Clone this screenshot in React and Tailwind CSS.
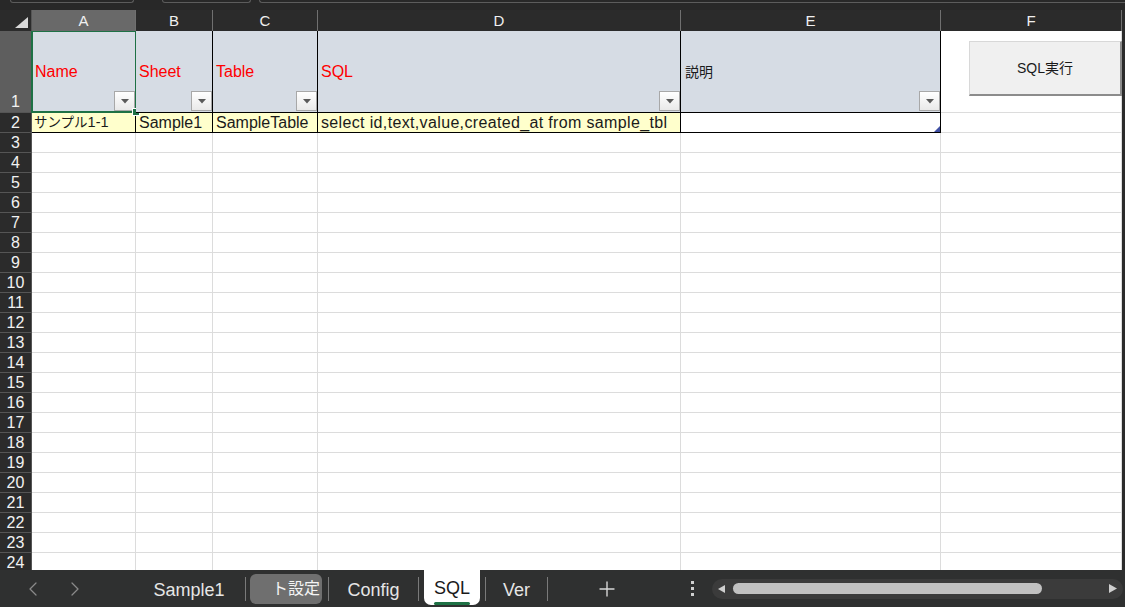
import React from 'react';
import { ChevronLeft, ChevronRight, Plus } from 'lucide-react';

const W = ['w-[104px]', 'w-[77px]', 'w-[105px]', 'w-[363px]', 'w-[260px]', 'w-[181px]'];
const LETTERS = ['A', 'B', 'C', 'D', 'E', 'F'];

function FilterBtn() {
  return (
    <div className="absolute right-0 bottom-[1px] w-[21px] h-[20px] border border-[#a8a8a8] bg-gradient-to-b from-white to-[#e9e9e9] flex items-center justify-center">
      <svg width="8" height="5" viewBox="0 0 8 5"><path d="M0 0 L8 0 L4 4.5 Z" fill="#5a5a5a" /></svg>
    </div>
  );
}

function RowHead({ n, sel }) {
  return (
    <div
      className={
        'w-[32px] shrink-0 border-r border-b border-[#555555] flex justify-center leading-none text-[16px] text-[#f2f2f2] ' +
        (sel ? 'bg-[#5e5e5e] items-end pb-[2px]' : 'bg-[#2b2b2b] items-center')
      }
    >
      {n}
    </div>
  );
}

function EmptyRow({ n }) {
  return (
    <div className="flex h-[20px] shrink-0">
      <RowHead n={n} />
      {W.map((w, i) => (
        <div key={i} className={w + ' shrink-0 bg-white border-r border-b border-[#dcdcdc]'} />
      ))}
    </div>
  );
}

export default function App() {
  const rows = [];
  for (let i = 3; i <= 24; i++) rows.push(i);
  return (
    <div className="w-[1125px] h-[607px] overflow-hidden flex flex-col bg-[#2b2b2b] font-['Liberation_Sans','Noto_Sans_CJK_JP',sans-serif]">
      {/* top strip */}
      <div className="h-[10px] shrink-0 flex bg-[#282828]">
        <div className="ml-[10px] w-[124px] h-[3px] border-b border-x border-[#5c5c5c] rounded-b-[5px]" />
        <div className="ml-[28px] w-[89px] h-[3px] border-b border-x border-[#5c5c5c] rounded-b-[5px]" />
        <div className="ml-[8px] flex-1 h-[3px] border-b border-l border-[#5c5c5c] rounded-bl-[5px]" />
      </div>

      {/* column headers */}
      <div className="h-[21px] shrink-0 flex text-[15px] leading-none text-[#f0f0f0]">
        <div className="w-[32px] shrink-0 border-r border-[#555555] relative">
          <svg className="absolute left-[15px] top-[7px]" width="13" height="11" viewBox="0 0 13 11">
            <path d="M13 0 L13 11 L0 11 Z" fill="#d9d9d9" />
          </svg>
        </div>
        {W.map((w, i) => (
          <div
            key={i}
            className={
              w +
              ' shrink-0 border-r border-[#707070] flex items-center justify-center ' +
              (i === 0 ? 'bg-[#696969]' : 'bg-[#2b2b2b]')
            }
          >
            {LETTERS[i]}
          </div>
        ))}
      </div>

      {/* grid */}
      <div className="flex-1 overflow-hidden relative">
        {/* row 1 */}
        <div className="flex h-[82px] shrink-0 text-[16px] leading-none">
          <RowHead n={1} sel />
          <div className={W[0] + ' shrink-0 relative bg-[#d6dce4] border-r border-b border-black flex items-center pl-[3px] text-[#ff0000]'}>
            Name
            <FilterBtn />
            <div className="absolute left-[-1px] top-[-1px] w-[106px] h-[83px] border-2 border-[#1e7145]">
              <div className="absolute right-[-4px] bottom-[-4px] w-[6px] h-[6px] bg-[#1e7145] outline outline-1 outline-white" />
            </div>
          </div>
          <div className={W[1] + ' shrink-0 relative bg-[#d6dce4] border-r border-b border-black flex items-center pl-[3px] text-[#ff0000]'}>
            Sheet
            <FilterBtn />
          </div>
          <div className={W[2] + ' shrink-0 relative bg-[#d6dce4] border-r border-b border-black flex items-center pl-[3px] text-[#ff0000]'}>
            Table
            <FilterBtn />
          </div>
          <div className={W[3] + ' shrink-0 relative bg-[#d6dce4] border-r border-b border-black flex items-center pl-[3px] text-[#ff0000]'}>
            SQL
            <FilterBtn />
          </div>
          <div className={W[4] + ' shrink-0 relative bg-[#d6dce4] border-r border-b border-black flex items-center pl-[4px] text-[#1a1a1a] text-[14px]'}>
            説明
            <FilterBtn />
          </div>
          <div className={W[5] + ' shrink-0 bg-white border-r border-b border-[#dcdcdc]'} />
        </div>

        {/* row 2 */}
        <div className="flex h-[20px] shrink-0 text-[16px] leading-none text-[#1a1a1a]">
          <RowHead n={2} />
          <div className={W[0] + ' shrink-0 bg-[#ffffcc] border-r border-b border-black flex items-center pl-[2px] whitespace-nowrap overflow-hidden'}>
            <span className="text-[13.5px]">サンプル</span>
            <span className="text-[14.5px]">1-1</span>
          </div>
          <div className={W[1] + ' shrink-0 bg-[#ffffcc] border-r border-b border-black flex items-center pl-[3px] whitespace-nowrap overflow-hidden'}>
            Sample1
          </div>
          <div className={W[2] + ' shrink-0 bg-[#ffffcc] border-r border-b border-black flex items-center pl-[3px] whitespace-nowrap overflow-hidden'}>
            SampleTable
          </div>
          <div className={W[3] + ' shrink-0 bg-[#ffffcc] border-r border-b border-black flex items-center pl-[3px] whitespace-nowrap overflow-hidden tracking-[0.35px]'}>
            select id,text,value,created_at from sample_tbl
          </div>
          <div className={W[4] + ' shrink-0 relative bg-white border-r border-b border-black'}>
            <svg className="absolute right-0 bottom-0" width="6" height="6" viewBox="0 0 6 6">
              <path d="M6 0 L6 6 L0 6 Z" fill="#3f4fa3" />
            </svg>
          </div>
          <div className={W[5] + ' shrink-0 bg-white border-r border-b border-[#dcdcdc]'} />
        </div>

        {rows.map((n) => (
          <EmptyRow key={n} n={n} />
        ))}

        {/* SQL実行 button (floating shape) */}
        <div className="absolute left-[969px] top-[10px] w-[153px] h-[55px] bg-[#f0f0f0] border-t border-l border-[#d8d8d8] border-r-2 border-b-2 border-r-[#8c8c8c] border-b-[#8c8c8c] flex items-center justify-center text-[14px] text-[#1a1a1a] leading-none pb-[1px]">
          SQL実行
        </div>
      </div>

      {/* sheet tab bar */}
      <div className="h-[37px] shrink-0 bg-[#2f3030] flex items-center text-[18px] leading-none text-[#e6e6e6]">
        <div className="w-[133px] shrink-0 flex items-center pl-[21px] gap-[18px] text-[#8a8a8a]">
          <ChevronLeft size={24} strokeWidth={1.25} />
          <ChevronRight size={24} strokeWidth={1.25} />
        </div>
        <div className="w-[112px] shrink-0 flex justify-center pt-[2px]">Sample1</div>
        <div className="w-px h-[24px] bg-[#7a7a7a] shrink-0" />
        <div className="ml-[4px] w-[72px] h-[30px] shrink-0 bg-[#6f6f6f] rounded-[6px] flex items-center justify-end pr-[2px] overflow-hidden whitespace-nowrap text-[16px] text-[#f4f4f4] pt-[1px]">
          ト設定
        </div>
        <div className="ml-[6px] w-px h-[24px] bg-[#7a7a7a] shrink-0" />
        <div className="w-[89px] shrink-0 flex justify-center pt-[2px]">Config</div>
        <div className="w-px h-[24px] bg-[#7a7a7a] shrink-0" />
        <div className="ml-[5px] w-[56px] h-[35px] self-start shrink-0 bg-white rounded-b-[7px] flex flex-col items-center pt-[9px] text-[#1a1a1a]">
          <span>SQL</span>
          <div className="mt-[5px] w-[36px] h-[3px] bg-[#1e7145] rounded-full" />
        </div>
        <div className="ml-[5px] w-px h-[24px] bg-[#7a7a7a] shrink-0" />
        <div className="w-[61px] shrink-0 flex justify-center pt-[2px]">Ver</div>
        <div className="w-px h-[24px] bg-[#7a7a7a] shrink-0" />
        <div className="ml-[47px] shrink-0 text-[#d6d6d6]">
          <Plus size={24} strokeWidth={1.4} />
        </div>
        <div className="ml-[71px] w-[4px] shrink-0 flex flex-col items-center gap-[3px]">
          <div className="w-[3px] h-[3px] bg-[#d0d0d0]" />
          <div className="w-[3px] h-[3px] bg-[#d0d0d0]" />
          <div className="w-[3px] h-[3px] bg-[#d0d0d0]" />
        </div>
        <div className="ml-[18px] w-[411px] h-[20px] shrink-0 rounded-full bg-[#3b3b3b] flex items-center px-[6px]">
          <svg width="8" height="8" viewBox="0 0 8 8" className="shrink-0">
            <path d="M7 0 L7 8 L0 4 Z" fill="#cfcfcf" />
          </svg>
          <div className="ml-[7px] w-[309px] h-[11px] rounded-full bg-[#c1c1c1] shrink-0" />
          <div className="flex-1" />
          <svg width="9" height="9" viewBox="0 0 9 9" className="shrink-0 mr-[-1px]">
            <path d="M0 0 L0 9 L8 4.5 Z" fill="#cfcfcf" />
          </svg>
        </div>
      </div>
    </div>
  );
}
